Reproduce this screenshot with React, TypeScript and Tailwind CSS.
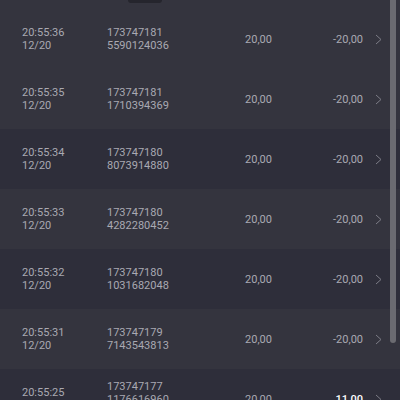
const rows = [
  { time: "20:55:36", date: "12/20", id: ["173747181", "5590124036"], bet: "20,00", net: "-20,00", light: true },
  { time: "20:55:35", date: "12/20", id: ["173747181", "1710394369"], bet: "20,00", net: "-20,00", light: true },
  { time: "20:55:34", date: "12/20", id: ["173747180", "8073914880"], bet: "20,00", net: "-20,00", light: false },
  { time: "20:55:33", date: "12/20", id: ["173747180", "4282280452"], bet: "20,00", net: "-20,00", light: true },
  { time: "20:55:32", date: "12/20", id: ["173747180", "1031682048"], bet: "20,00", net: "-20,00", light: false },
  { time: "20:55:31", date: "12/20", id: ["173747179", "7143543813"], bet: "20,00", net: "-20,00", light: true },
  { time: "20:55:25", date: "12/20", id: ["173747177", "1176616960", "1"], bet: "20,00", net: "11,00", light: false, win: true },
];

const Chevron = () => (
  <svg width="7" height="11" viewBox="0 0 7 11" fill="none" className="shrink-0">
    <polyline points="1,1 6,5.5 1,10" stroke="#7c7c86" strokeWidth="1" />
  </svg>
);

export default function App() {
  return (
    <div
      className="relative h-[400px] w-[400px] overflow-hidden bg-[#34343e] text-[11px] leading-[13px] text-[#a9a9b2]"
      style={{ fontFamily: "Roboto, 'Liberation Sans', sans-serif" }}
    >
      <div className="h-[9px] bg-[#34343e]" />
      {rows.map((r, i) => (
        <div
          key={i}
          className={`flex h-[60px] items-center pl-[22px] ${r.light ? "bg-[#34343e]" : "bg-[#2e2e3a]"}`}
        >
          <div className="w-[85px]">
            <div>{r.time}</div>
            <div>{r.date}</div>
          </div>
          <div className="w-[123px]">
            {r.id.map((line, j) => (
              <div key={j}>{line}</div>
            ))}
          </div>
          <div className="w-[42px] text-right">{r.bet}</div>
          <div className={`w-[91px] text-right ${r.win ? "font-medium text-white" : ""}`}>{r.net}</div>
          <div className="ml-[12px]">
            <Chevron />
          </div>
        </div>
      ))}
      <div className="absolute left-[128px] top-0 h-[3px] w-[34px] rounded-b-sm bg-[#25252d]" />
      <div className="absolute right-[4px] top-0 h-[343px] w-[6px] rounded-b-full bg-[#6b6b71]" />
    </div>
  );
}
